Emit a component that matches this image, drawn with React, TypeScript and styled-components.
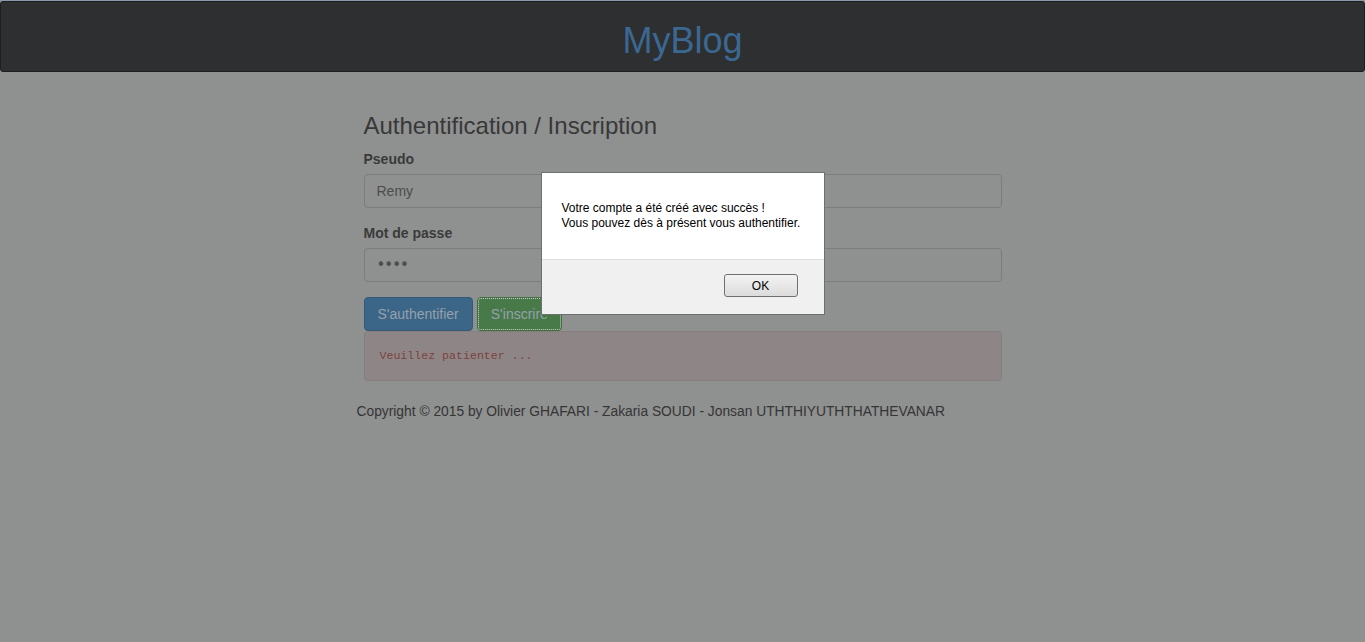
import React from 'react';
import styled, { createGlobalStyle } from 'styled-components';

const GlobalStyle = createGlobalStyle`
  html, body {
    margin: 0;
    padding: 0;
    background: #8f9090;
    font-family: "Liberation Sans", Arial, Helvetica, sans-serif;
    font-size: 14px;
    color: #383838;
  }
  body {
    border-top: 1px solid #8c9bab;
    min-height: 641px;
  }
  * {
    box-sizing: border-box;
  }
`;

const Navbar = styled.header`
  height: 71px;
  background-color: #2e2f30;
  border: 1px solid #1d1e1f;
  border-radius: 3px;
  display: flex;
  align-items: center;
  justify-content: center;
`;

const Brand = styled.div`
  font-size: 36px;
  line-height: 1;
  color: #3b6892;
  padding-top: 8px;
`;

const Container = styled.main`
  width: 652px;
  margin: 0 auto;
  padding-top: 21px;
`;

const Form = styled.form`
  padding: 0 7px;
`;

const Title = styled.h3`
  margin: 20px 0 10px;
  font-size: 24px;
  font-weight: 500;
  line-height: 1.1;
  color: #383838;
`;

const Group = styled.div`
  margin-bottom: 15px;
`;

const Label = styled.label`
  display: block;
  font-weight: bold;
  line-height: 20px;
  margin-bottom: 5px;
  color: #3a3a3a;
`;

const Input = styled.input<{ $secret?: boolean }>`
  display: block;
  width: 100%;
  height: 34px;
  padding: 6px 12px;
  font-family: ${(p) => (p.$secret ? '"DejaVu Sans", sans-serif' : '"Liberation Sans", Arial, sans-serif')};
  font-size: ${(p) => (p.$secret ? '15px' : '14px')};
  letter-spacing: ${(p) => (p.$secret ? '-1px' : 'normal')};
  color: #4c4c4c;
  background: #8f9090;
  border: 1px solid #7b7c7c;
  border-radius: 4px;
  outline: none;
`;

const Actions = styled.div`
  display: flex;
  gap: 4px;
`;

const Button = styled.button<{ $variant: 'primary' | 'success'; $focused?: boolean }>`
  height: 34px;
  padding: 6px 13px;
  font-family: "Liberation Sans", Arial, sans-serif;
  font-size: 14px;
  line-height: 20px;
  color: #95a1ab;
  background: ${(p) => (p.$variant === 'primary' ? '#3b6687' : '#487a49')};
  border: 1px solid ${(p) => (p.$variant === 'primary' ? '#335b79' : '#416e41')};
  border-radius: 4px;
  outline: ${(p) => (p.$focused ? '1px dotted #c8d0c8' : 'none')};
  outline-offset: -2px;
  cursor: pointer;
`;

const Alert = styled.div`
  padding: 15px;
  background: #8e8686;
  border: 1px solid #867d7d;
  border-radius: 4px;
  font-family: "Liberation Mono", "Courier New", monospace;
  font-size: 11.6px;
  line-height: 18px;
  color: #7d4240;
`;

const Footer = styled.footer`
  margin-top: 21px;
  font-size: 13.8px;
  line-height: 20px;
  color: #353535;
`;

const Dialog = styled.div`
  position: absolute;
  top: 172px;
  left: 50%;
  transform: translateX(-50%);
  width: 284px;
  background: #ffffff;
  border: 1px solid #6f6f6f;
  font-family: "Liberation Sans", Arial, sans-serif;
  font-size: 12px;
  color: #000;
`;

const DialogBody = styled.div`
  padding: 28px 20px 28px;
  line-height: 15px;
`;

const DialogFooter = styled.div`
  display: flex;
  justify-content: flex-end;
  padding: 14px 26px 17px;
  background: #f0f0f0;
  border-top: 1px solid #dfdfdf;
`;

const OkButton = styled.button`
  width: 74px;
  height: 23px;
  font-family: "Liberation Sans", Arial, sans-serif;
  font-size: 12px;
  color: #000;
  background: linear-gradient(#f3f3f3, #dcdcdc);
  border: 1px solid #707070;
  border-radius: 3px;
  padding: 0;
`;

export default function App() {
  return (
    <>
      <GlobalStyle />
      <Navbar>
        <Brand>MyBlog</Brand>
      </Navbar>
      <Container>
        <Form onSubmit={(e) => e.preventDefault()}>
          <Title>Authentification / Inscription</Title>
          <Group>
            <Label>Pseudo</Label>
            <Input type="text" defaultValue="Remy" />
          </Group>
          <Group>
            <Label>Mot de passe</Label>
            <Input $secret type="password" defaultValue="remy" />
          </Group>
          <Actions>
            <Button $variant="primary">S'authentifier</Button>
            <Button $variant="success" $focused>
              S'inscrire
            </Button>
          </Actions>
          <Alert>Veuillez patienter ...</Alert>
        </Form>
        <Footer>Copyright © 2015 by Olivier GHAFARI - Zakaria SOUDI - Jonsan UTHTHIYUTHTHATHEVANAR</Footer>
      </Container>
      <Dialog role="alertdialog">
        <DialogBody>
          Votre compte a été créé avec succès !
          <br />
          Vous pouvez dès à présent vous authentifier.
        </DialogBody>
        <DialogFooter>
          <OkButton>OK</OkButton>
        </DialogFooter>
      </Dialog>
    </>
  );
}
